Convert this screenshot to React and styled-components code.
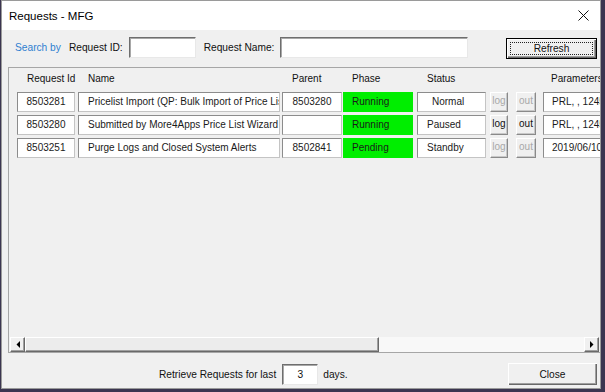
import React from "react";
import styled, { createGlobalStyle } from "styled-components";

const Global = createGlobalStyle`
  html, body { margin: 0; padding: 0; }
  body {
    background: #3b3550;
    font-family: "Liberation Sans", Arial, sans-serif;
    width: 605px;
    height: 392px;
    overflow: hidden;
  }
`;

const Window = styled.div`
  margin-left: 1px;
  width: 600px;
  height: 389px;
  box-sizing: border-box;
  border: 1px solid #9a9a9a;
  background: #f0f0f0;
  display: flex;
  flex-direction: column;
  overflow: hidden;
`;

const TitleBar = styled.div`
  height: 29px;
  flex-shrink: 0;
  background: #ffffff;
  display: flex;
  align-items: center;
  justify-content: space-between;
  padding: 0 7px 0 7px;
`;

const Title = styled.span`
  font-size: 11.5px;
  color: #000;
`;

const CloseX = styled.svg`
  width: 11px;
  height: 11px;
  margin-right: 4px;
`;

const SearchRow = styled.div`
  height: 37px;
  flex-shrink: 0;
  box-sizing: border-box;
  padding: 7px 3px 0 13px;
  display: flex;
  align-items: flex-start;
`;

const Label = styled.span`
  font-size: 10.2px;
  line-height: 21px;
  color: ${(p) => (p.$blue ? "#2f7fd0" : "#111")};
  margin-left: ${(p) => p.$ml || 0}px;
  white-space: nowrap;
`;

const TextBox = styled.div`
  box-sizing: border-box;
  width: ${(p) => p.$w}px;
  height: 21px;
  margin-left: ${(p) => p.$ml || 0}px;
  background: #fff;
  border-style: solid;
  border-width: 1px;
  border-color: #6e6e6e #e8e8e8 #e8e8e8 #6e6e6e;
  box-shadow: inset 1px 1px 0 #a8a8a8;
  font-size: 10.2px;
  line-height: 19px;
  text-align: center;
  color: #111;
`;

const Button = styled.div`
  position: relative;
  box-sizing: border-box;
  width: ${(p) => p.$w}px;
  height: ${(p) => p.$h}px;
  margin-left: auto;
  margin-top: ${(p) => p.$mt || 0}px;
  background: #f0f0f0;
  border: 1px solid ${(p) => (p.$default ? "#000" : "transparent")};
  box-shadow: inset 1px 1px 0 #fff, inset -1px -1px 0 #696969, inset -2px -2px 0 #a0a0a0;
  display: flex;
  align-items: center;
  justify-content: center;
  font-size: 10.2px;
  color: #111;
`;

const Focus = styled.span`
  position: absolute;
  inset: 3px 3px 3px 3px;
  border: 1px dotted #222;
`;

const Panel = styled.div`
  margin-left: 6px;
  margin-right: -2px;
  height: 286px;
  flex-shrink: 0;
  box-sizing: border-box;
  border: 1px solid #a6a6a6;
  border-right-color: #7a7a7a;
  display: flex;
  flex-direction: column;
  overflow: hidden;
`;

const Rows = styled.div`
  flex: 1;
  display: flex;
  flex-direction: column;
  gap: 3px;
`;

const HeaderRow = styled.div`
  height: 21px;
  display: flex;
  flex-shrink: 0;
`;

const Row = styled.div`
  height: 20px;
  display: flex;
  flex-shrink: 0;
`;

const Head = styled.div`
  flex-shrink: 0;
  width: ${(p) => p.$w}px;
  margin-left: ${(p) => p.$ml}px;
  padding-left: ${(p) => p.$pl}px;
  box-sizing: border-box;
  font-size: 10px;
  line-height: 22px;
  color: #111;
  white-space: nowrap;
`;

const Cell = styled.div`
  flex-shrink: 0;
  box-sizing: border-box;
  width: ${(p) => p.$w}px;
  margin-left: ${(p) => p.$ml}px;
  padding-left: ${(p) => p.$pl ?? 0}px;
  background: ${(p) => (p.$green ? "#00ee00" : "#fff")};
  border-style: solid;
  border-width: ${(p) => (p.$green ? "0" : "1px")};
  border-color: #8c8c8c #c4c4c4 #c4c4c4 #8c8c8c;
  font-size: 10px;
  line-height: ${(p) => (p.$green ? "20px" : "18px")};
  color: #1a1a1a;
  text-align: ${(p) => (p.$center ? "center" : "left")};
  white-space: nowrap;
  overflow: hidden;
  text-overflow: clip;
`;

const MiniButton = styled.div`
  flex-shrink: 0;
  box-sizing: border-box;
  width: ${(p) => p.$w}px;
  margin-left: ${(p) => p.$ml}px;
  background: #f0f0f0;
  border-style: solid;
  border-width: 1px;
  border-color: #fff #8a8a8a #8a8a8a #fff;
  box-shadow: inset -1px -1px 0 #c8c8c8;
  font-size: 10px;
  line-height: 16px;
  text-align: center;
  color: ${(p) => (p.$disabled ? "#a8a8a8" : "#111")};
`;

const ScrollBar = styled.div`
  height: 15px;
  margin: 0 2px 0 1px;
  flex-shrink: 0;
  display: flex;
  background: #f8f8f8;
`;

const ScrollBtn = styled.div`
  width: 15px;
  flex-shrink: 0;
  box-sizing: border-box;
  background: #f0f0f0;
  border-style: solid;
  border-width: 1px;
  border-color: #fff #696969 #696969 #fff;
  box-shadow: inset -1px -1px 0 #a0a0a0;
  display: flex;
  align-items: center;
  justify-content: center;
`;

const Thumb = styled.div`
  width: ${(p) => p.$w}px;
  flex-shrink: 0;
  box-sizing: border-box;
  background: #ececec;
  border-style: solid;
  border-width: 1px;
  border-color: #fff #696969 #696969 #fff;
  box-shadow: inset -1px -1px 0 #a0a0a0;
`;

const Track = styled.div`
  flex: 1;
`;

const Footer = styled.div`
  flex: 1;
  display: flex;
  align-items: flex-start;
  box-sizing: border-box;
  padding: 9px 2px 0 157px;
`;

const FooterLeft = styled.div`
  display: flex;
  align-items: center;
  margin-top: 2px;
`;

const cols = [
  { w: 58, ml: 8 },
  { w: 202, ml: 3 },
  { w: 60, ml: 2 },
  { w: 70, ml: 1 },
  { w: 69, ml: 4 },
  { w: 18, ml: 4 },
  { w: 20, ml: 8 },
  { w: 90, ml: 7 },
];

const headers = [
  ["Request Id", 10],
  ["Name", 10],
  ["Parent", 10],
  ["Phase", 9],
  ["Status", 10],
  ["", 0],
  ["", 0],
  ["Parameters", 8],
];

const data = [
  {
    id: "8503281",
    name: "Pricelist Import (QP: Bulk Import of Price List)",
    parent: "8503280",
    phase: "Running",
    status: "Normal",
    statusPl: 14,
    disabled: true,
    param: "PRL, , 1245",
  },
  {
    id: "8503280",
    name: "Submitted by More4Apps Price List Wizard",
    parent: "",
    phase: "Running",
    status: "Paused",
    statusPl: 9,
    disabled: false,
    param: "PRL, , 1245",
  },
  {
    id: "8503251",
    name: "Purge Logs and Closed System Alerts",
    parent: "8502841",
    phase: "Pending",
    status: "Standby",
    statusPl: 9,
    disabled: true,
    param: "2019/06/10",
  },
];

const Arrow = ({ dir }) => (
  <svg width="4" height="7" viewBox="0 0 4 7">
    {dir === "left" ? (
      <polygon points="4,0 4,7 0.5,3.5" fill="#000" />
    ) : (
      <polygon points="0,0 0,7 3.5,3.5" fill="#000" />
    )}
  </svg>
);

export default function App() {
  return (
    <>
      <Global />
      <Window>
        <TitleBar>
          <Title>Requests - MFG</Title>
          <CloseX viewBox="0 0 11 11">
            <path d="M0.5 0.5 L10.5 10.5 M10.5 0.5 L0.5 10.5" stroke="#111" strokeWidth="1" />
          </CloseX>
        </TitleBar>
        <SearchRow>
          <Label $blue>Search by</Label>
          <Label $ml={8}>Request ID:</Label>
          <TextBox $w={67} $ml={6} />
          <Label $ml={8}>Request Name:</Label>
          <TextBox $w={188} $ml={6} />
          <Button $default $w={91} $h={21} $mt={1}>
            <Focus />
            Refresh
          </Button>
        </SearchRow>
        <Panel>
          <Rows>
            <HeaderRow>
              {headers.map(([t, pl], i) => (
                <Head key={i} $w={cols[i].w} $ml={cols[i].ml} $pl={pl}>
                  {t}
                </Head>
              ))}
            </HeaderRow>
            {data.map((r) => (
              <Row key={r.id}>
                <Cell $w={cols[0].w} $ml={cols[0].ml} $center>
                  {r.id}
                </Cell>
                <Cell $w={cols[1].w} $ml={cols[1].ml} $pl={9}>
                  {r.name}
                </Cell>
                <Cell $w={cols[2].w} $ml={cols[2].ml} $center>
                  {r.parent}
                </Cell>
                <Cell $w={cols[3].w} $ml={cols[3].ml} $pl={9} $green>
                  {r.phase}
                </Cell>
                <Cell $w={cols[4].w} $ml={cols[4].ml} $pl={r.statusPl}>
                  {r.status}
                </Cell>
                <MiniButton $w={cols[5].w} $ml={cols[5].ml} $disabled={r.disabled}>
                  log
                </MiniButton>
                <MiniButton $w={cols[6].w} $ml={cols[6].ml} $disabled={r.disabled}>
                  out
                </MiniButton>
                <Cell $w={cols[7].w} $ml={cols[7].ml} $pl={8}>
                  {r.param}
                </Cell>
              </Row>
            ))}
          </Rows>
          <ScrollBar>
            <ScrollBtn>
              <Arrow dir="left" />
            </ScrollBtn>
            <Thumb $w={354} />
            <Track />
            <ScrollBtn>
              <Arrow dir="right" />
            </ScrollBtn>
          </ScrollBar>
        </Panel>
        <Footer>
          <FooterLeft>
            <Label>Retrieve Requests for last</Label>
            <TextBox $w={36} $ml={6}>3</TextBox>
            <Label $ml={5}>days.</Label>
          </FooterLeft>
          <Button $w={91} $h={24}>
            Close
          </Button>
        </Footer>
      </Window>
    </>
  );
}
